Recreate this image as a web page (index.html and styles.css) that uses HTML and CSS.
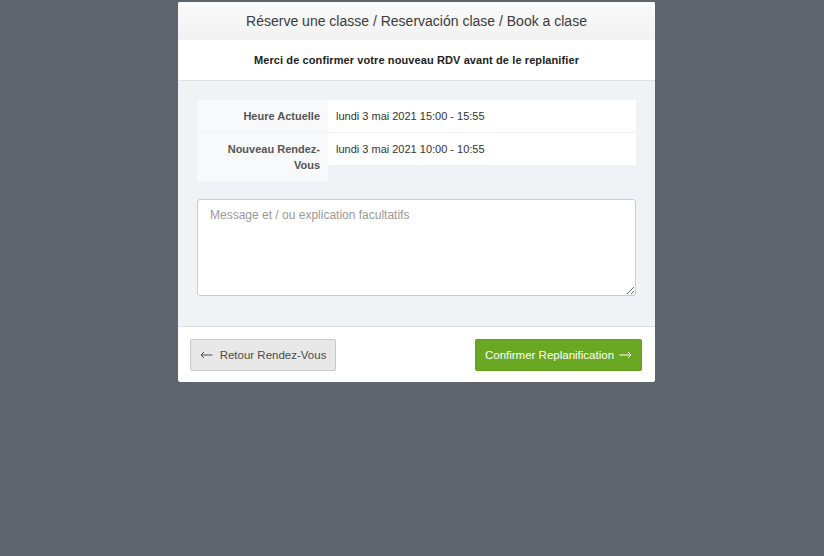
FILE: index.html
```html
<!DOCTYPE html>
<html lang="fr">
<head>
<meta charset="utf-8">
<link rel="stylesheet" href="styles.css">
</head>
<body>
<div class="modal">
  <div class="modal-header">Réserve une classe / Reservación clase / Book a clase</div>
  <div class="modal-sub">Merci de confirmer votre nouveau RDV avant de le replanifier</div>
  <div class="modal-body">
    <div class="details">
      <div class="label">Heure Actuelle</div>
      <div class="value">lundi 3 mai 2021 15:00 - 15:55</div>
      <div class="label">Nouveau Rendez-<br>Vous</div>
      <div class="value">lundi 3 mai 2021 10:00 - 10:55</div>
    </div>
    <textarea class="message" placeholder="Message et / ou explication facultatifs"></textarea>
  </div>
  <div class="modal-footer">
    <button class="btn btn-back"><svg class="arrow arrow-left" width="13" height="8" viewBox="0 0 13 8"><path d="M12.5 4H1M4 1L1 4l3 3" fill="none" stroke="currentColor" stroke-width="1"/></svg>Retour Rendez-Vous</button>
    <button class="btn btn-confirm">Confirmer Replanification<svg class="arrow arrow-right" width="13" height="8" viewBox="0 0 13 8"><path d="M0.5 4H12M9 1l3 3-3 3" fill="none" stroke="currentColor" stroke-width="1"/></svg></button>
  </div>
</div>
</body>
</html>
```
FILE: styles.css
```css
html, body {
  margin: 0;
  padding: 0;
  background: #5e656c;
  font-family: "Liberation Sans", Arial, sans-serif;
}
.modal {
  width: 477px;
  margin: 2px 0 0 178px;
  background: #fff;
  border-radius: 2px;
  overflow: hidden;
}
.modal-header {
  height: 38px;
  line-height: 38px;
  text-align: center;
  font-size: 14px;
  color: #3a3a3a;
  background: linear-gradient(#fafafa, #f2f2f2);
}
.modal-sub {
  height: 40px;
  line-height: 40px;
  text-align: center;
  font-size: 11px;
  letter-spacing: 0.1px;
  font-weight: bold;
  color: #222;
  border-bottom: 1px solid #dde3e8;
}
.modal-body {
  background: #f0f3f6;
  padding: 19px 19px 30px;
  border-bottom: 1px solid #dde1e5;
}
.details {
  display: grid;
  grid-template-columns: 131px 1fr;
  row-gap: 1px;
  align-items: start;
  font-size: 11px;
  line-height: 16px;
  color: #333;
}
.label {
  background: #f7f9fb;
  text-align: right;
  padding: 8px 8px;
  font-weight: bold;
  color: #555;
  align-self: stretch;
}
.value {
  background: #fff;
  padding: 8px 8px;
}
.message {
  display: block;
  box-sizing: border-box;
  width: 100%;
  height: 97px;
  margin-top: 18px;
  padding: 8px 12px;
  border: 1px solid #ccc;
  border-radius: 3px;
  font-family: "Liberation Sans", Arial, sans-serif;
  font-size: 12px;
  background: #fff;
}
.message::placeholder {
  color: #999;
}
.modal-footer {
  display: flex;
  justify-content: space-between;
  padding: 12px 13px 11px 12px;
}
.btn {
  box-sizing: border-box;
  height: 32px;
  border-radius: 2px;
  font-family: "Liberation Sans", Arial, sans-serif;
  font-size: 11.5px;
  padding: 0 10px;
  white-space: nowrap;
  display: flex;
  align-items: center;
  justify-content: center;
}
.arrow {
  flex: none;
}
.arrow-left {
  margin-right: 7px;
}
.arrow-right {
  margin-left: 5px;
}
.btn-back {
  width: 146px;
  background: #e8e8e8;
  border: 1px solid #c8c8c8;
  color: #4a4a4a;
}
.btn-confirm {
  width: 167px;
  background: #6aa823;
  border: 1px solid #62a01c;
  color: #fff;
}
```
